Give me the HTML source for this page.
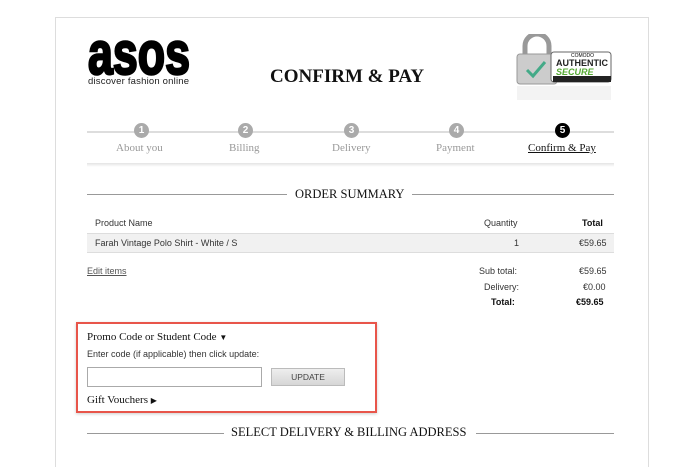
<!DOCTYPE html>
<html><head><meta charset="utf-8"><style>
*{margin:0;padding:0;box-sizing:border-box}
body{width:700px;height:449px;overflow:hidden;background:#fff;position:relative;font-family:"Liberation Sans",sans-serif;color:#222}
.a{position:absolute}
.serif{font-family:"Liberation Serif",serif}
.box{left:55px;top:17px;width:594px;height:450px;border:1px solid #ddd;border-bottom:none}
.sm{font-size:9px;color:#333}
.line{height:1px;background:#999}
</style></head><body>
<div class="a box"></div>
<svg class="a" style="left:80px;top:30px" width="120" height="60"><text x="8" y="44" font-family="Liberation Sans" font-weight="bold" font-size="60" textLength="102" lengthAdjust="spacingAndGlyphs" fill="#000" stroke="#000" stroke-width="2.5">asos</text></svg>
<div class="a" style="left:88px;top:76px;font-size:9.5px;color:#222;letter-spacing:0.2px">discover fashion online</div>
<div class="a serif" style="left:270px;top:66px;font-size:19px;font-weight:bold;color:#111">CONFIRM &amp; PAY</div>
<svg class="a" style="left:513px;top:34px" width="100" height="68">
<path d="M12 20 v-8 a12 12 0 0 1 24 0 v8" fill="none" stroke="#999" stroke-width="5"/>
<rect x="4" y="20" width="40" height="30" rx="3" fill="#ccc" stroke="#999"/>
<path d="M14 36 l6 6 l12-14" fill="none" stroke="#4a8" stroke-width="3"/>
<rect x="38" y="18" width="60" height="30" rx="3" fill="#fff" stroke="#666"/>
<text x="58" y="23" font-size="5" font-family="Liberation Sans">COMODO</text>
<text x="43" y="32" font-size="9" font-weight="bold" fill="#222" font-family="Liberation Sans">AUTHENTIC</text>
<text x="43" y="41" font-size="9" font-weight="bold" font-style="italic" fill="#5a3" font-family="Liberation Sans">SECURE</text>
<rect x="40" y="42" width="58" height="6" fill="#222"/>
<rect x="4" y="52" width="94" height="14" fill="#f3f3f3"/>
</svg>
<div class="a" style="left:87px;top:131px;width:527px;height:2px;background:#ddd"></div>
<div class="a" style="left:87px;top:163px;width:527px;height:4px;background:linear-gradient(#e4e4e4,#fff)"></div>
<div class="a" style="left:134px;top:123px;width:15px;height:15px;border-radius:50%;background:#aaa;color:#fff;font:bold 10px/15px sans-serif;text-align:center">1</div>
<div class="a" style="left:238px;top:123px;width:15px;height:15px;border-radius:50%;background:#aaa;color:#fff;font:bold 10px/15px sans-serif;text-align:center">2</div>
<div class="a" style="left:344px;top:123px;width:15px;height:15px;border-radius:50%;background:#aaa;color:#fff;font:bold 10px/15px sans-serif;text-align:center">3</div>
<div class="a" style="left:449px;top:123px;width:15px;height:15px;border-radius:50%;background:#aaa;color:#fff;font:bold 10px/15px sans-serif;text-align:center">4</div>
<div class="a" style="left:555px;top:123px;width:15px;height:15px;border-radius:50%;background:#000;color:#fff;font:bold 10px/15px sans-serif;text-align:center">5</div>
<div class="a serif" style="left:116px;top:142px;font-size:11px;color:#999">About you</div>
<div class="a serif" style="left:229px;top:142px;font-size:11px;color:#999">Billing</div>
<div class="a serif" style="left:332px;top:142px;font-size:11px;color:#999">Delivery</div>
<div class="a serif" style="left:436px;top:142px;font-size:11px;color:#999">Payment</div>
<div class="a serif" style="left:528px;top:142px;font-size:11px;color:#111;text-decoration:underline">Confirm &amp; Pay</div>
<div class="a line" style="left:87px;top:194px;width:200px"></div>
<div class="a line" style="left:412px;top:194px;width:202px"></div>
<div class="a serif" style="left:295px;top:187px;font-size:12.5px;color:#111">ORDER SUMMARY</div>
<div class="a sm" style="left:95px;top:218px">Product Name</div>
<div class="a sm" style="left:484px;top:218px">Quantity</div>
<div class="a sm" style="left:582px;top:218px;font-weight:bold;color:#111">Total</div>
<div class="a" style="left:87px;top:233px;width:527px;height:20px;background:#f1f1f1;border-top:1px solid #ddd;border-bottom:1px solid #ddd"></div>
<div class="a sm" style="left:95px;top:238px">Farah Vintage Polo Shirt - White / S</div>
<div class="a sm" style="left:514px;top:238px">1</div>
<div class="a sm" style="left:579px;top:238px">€59.65</div>
<div class="a sm" style="left:87px;top:266px;color:#555;text-decoration:underline">Edit items</div>
<div class="a sm" style="left:479px;top:266px">Sub total:</div>
<div class="a sm" style="left:579px;top:266px">€59.65</div>
<div class="a sm" style="left:484px;top:282px">Delivery:</div>
<div class="a sm" style="left:583px;top:282px">€0.00</div>
<div class="a sm" style="left:491px;top:297px;font-weight:bold;color:#111">Total:</div>
<div class="a sm" style="left:576px;top:297px;font-weight:bold;color:#111">€59.65</div>
<div class="a" style="left:76px;top:322px;width:301px;height:91px;border:2px solid #e8554a;box-shadow:0 1px 3px rgba(0,0,0,.2)"></div>
<div class="a serif" style="left:87px;top:331px;font-size:11px;color:#111">Promo Code or Student Code <span style="font-size:8px">▼</span></div>
<div class="a sm" style="left:87px;top:349px">Enter code (if applicable) then click update:</div>
<div class="a" style="left:87px;top:367px;width:175px;height:20px;border:1px solid #aaa;background:#fff"></div>
<div class="a" style="left:271px;top:368px;width:74px;height:18px;border:1px solid #bbb;background:linear-gradient(#eee,#d6d6d6);font-size:8.5px;color:#444;text-align:center;line-height:17px">UPDATE</div>
<div class="a serif" style="left:87px;top:394px;font-size:11px;color:#111">Gift Vouchers <span style="font-size:8px">▶</span></div>
<div class="a line" style="left:87px;top:433px;width:137px"></div>
<div class="a line" style="left:476px;top:433px;width:138px"></div>
<div class="a serif" style="left:231px;top:425px;font-size:12.5px;color:#111">SELECT DELIVERY &amp; BILLING ADDRESS</div>
</body></html>
